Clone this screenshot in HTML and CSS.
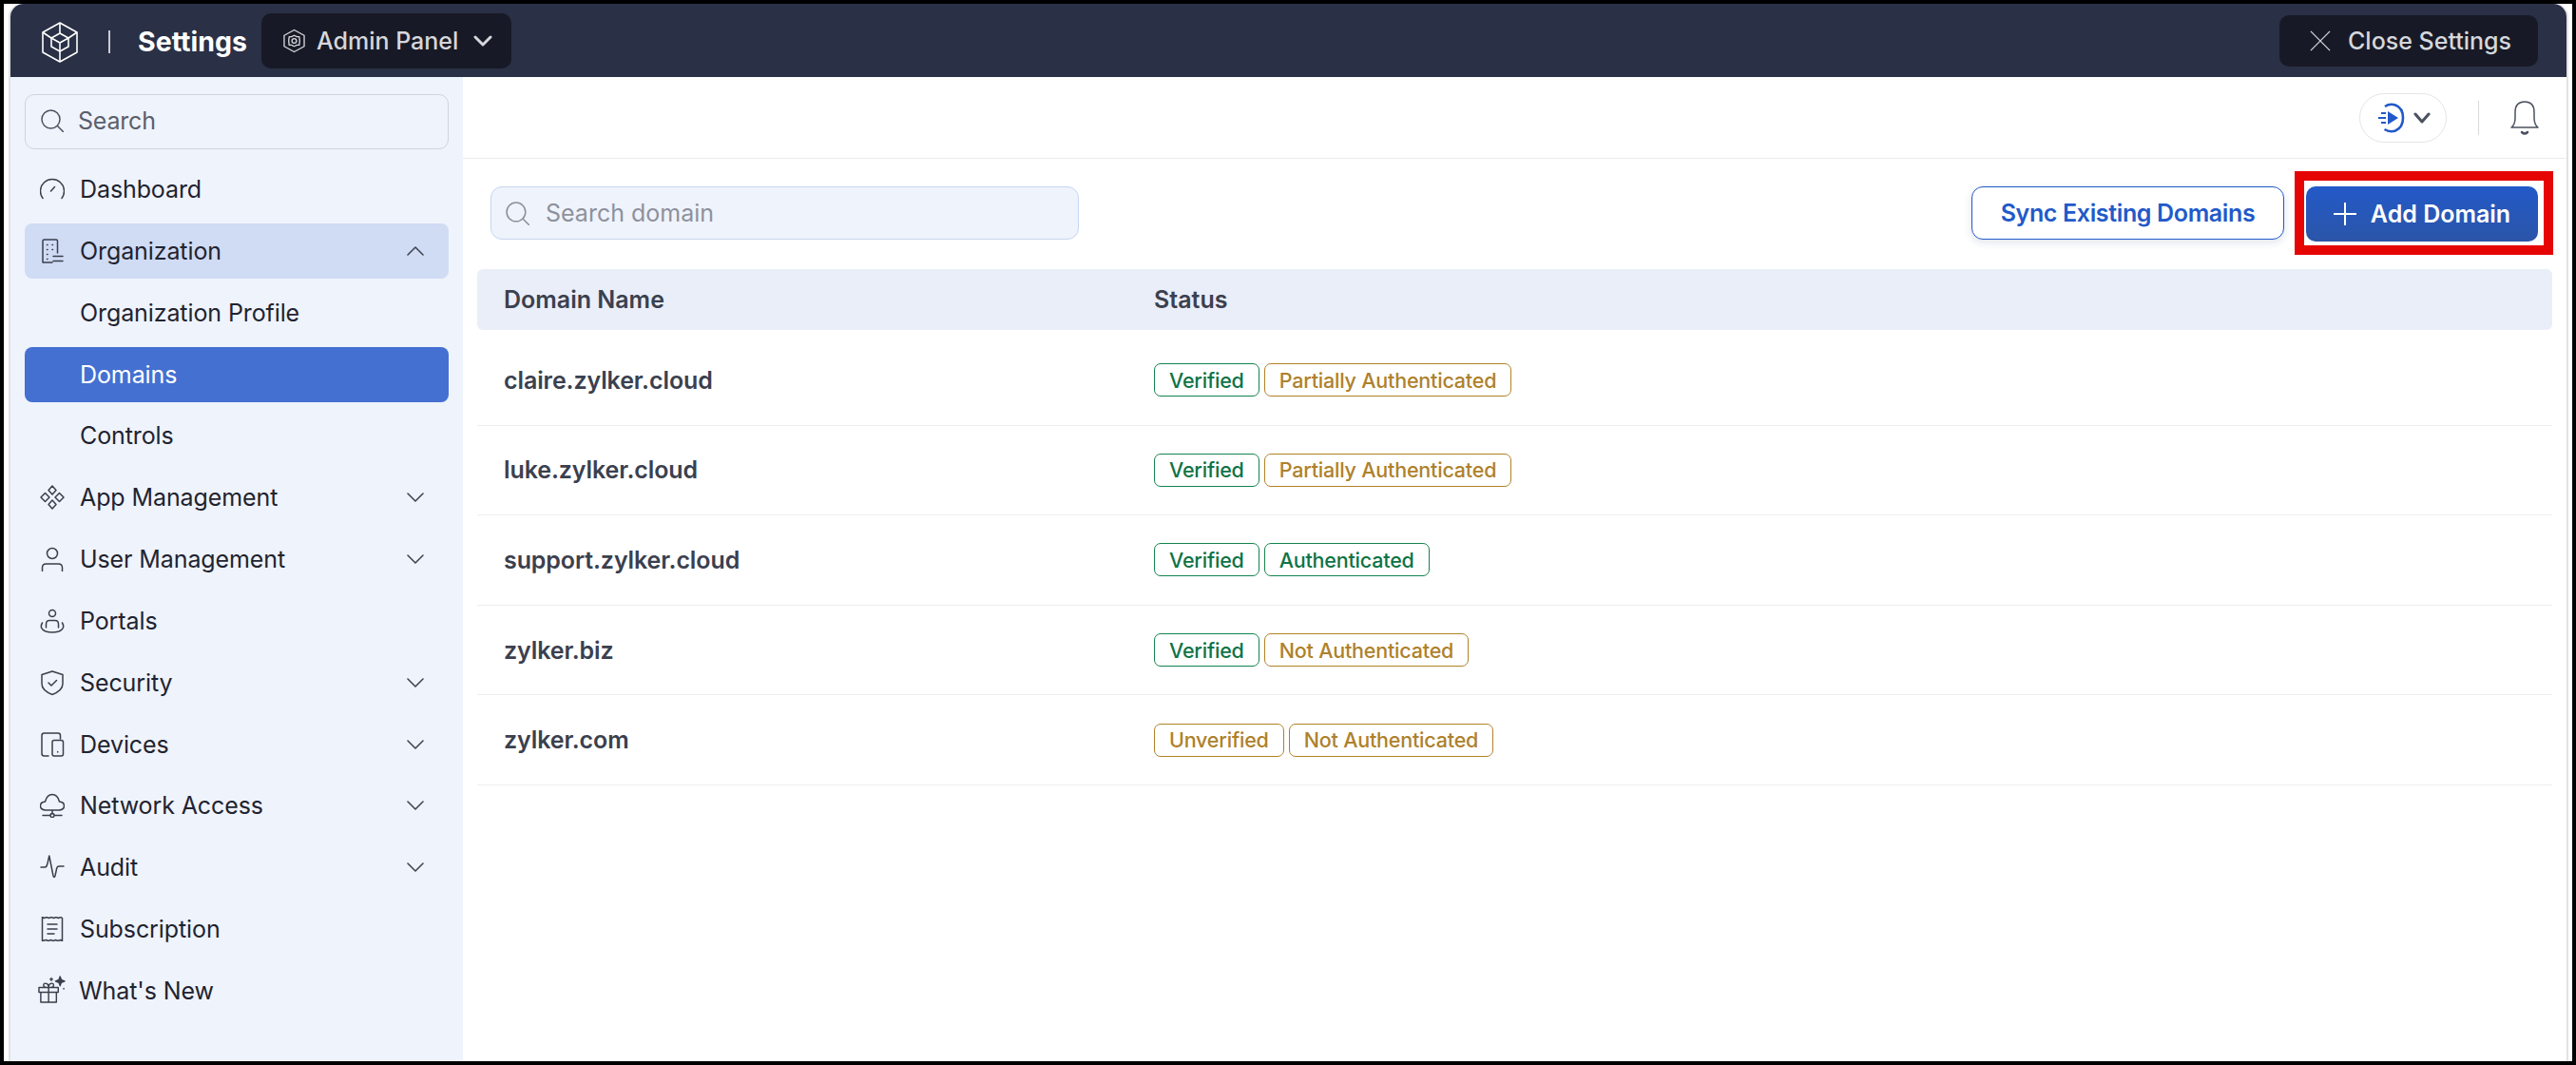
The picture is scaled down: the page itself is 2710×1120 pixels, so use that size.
FILE: index.html
```html
<!DOCTYPE html>
<html lang="en">
<head>
    <meta charset="UTF-8">
    <title>Settings - Domains</title>
    <link rel="stylesheet" href="styles.css">
</head>
<body>
    <div class="frame">
        <div class="app">
            <header class="topbar">
                <svg class="logo" viewBox="0 0 38 43" fill="none" stroke="#fff" stroke-width="1.6" stroke-linejoin="round">
                    <path d="M19 1 37 11V32L19 42 1 32V11Z"/>
                    <path d="M19 12 28 17V26L19 31 10 26V17Z"/>
                    <path d="M10 17 19 22 28 17M19 22V31M1 11 10 17M37 11 28 17M19 31V42M19 1V12"/>
                </svg>
                <span class="topbar-sep"></span>
                <span class="topbar-title">Settings</span>
                <div class="panel-switch">
                    <svg class="panel-icon" viewBox="0 0 24 26" fill="none" stroke="#d6d7dc" stroke-width="1.4" stroke-linejoin="round">
                        <path d="M12 1 23 7V19L12 25 1 19V7Z"/>
                        <path d="M12 7 15 8.500 17.500 8.500 18 12 18 14 17.500 17.500 15 17.500 12 19 9 17.500 6.500 17.500 6 14 6 12 6.500 8.500 9 8.500Z"/>
                        <circle cx="12" cy="13" r="2.500"/>
                    </svg>
                    <span>Admin Panel</span>
                    <svg class="panel-caret" viewBox="0 0 20 12" fill="none" stroke="#d6d7dc" stroke-width="3" stroke-linecap="round" stroke-linejoin="round"><path d="M2 2 10 10 18 2"/></svg>
                </div>
                <div class="close-btn">
                    <svg class="close-icon" viewBox="0 0 24 24" fill="none" stroke="#d6d7dc" stroke-width="1.400"><path d="M1 1 23 23M23 1 1 23"/></svg>
                    <span>Close Settings</span>
                </div>
            </header>

            <div class="body-row">
                <aside class="sidebar">
                    <div class="side-search">
                        <svg class="search-icon" viewBox="0 0 24 24" fill="none" stroke="#4c5160" stroke-width="1.500" stroke-linecap="round"><circle cx="10.500" cy="10.500" r="9.500"/><path d="M17.500 17.500 23.500 23.500"/></svg>
                        <span>Search</span>
                    </div>
                    <nav class="side-nav">
                        <a class="nav-item">
                            <svg class="nav-icon" viewBox="0 0 26 26"><path d="M3 22.500A12.500 12.500 0 1 1 23 22.500M11.500 15 15.500 10.500"/></svg>
                            <span class="nav-label">Dashboard</span>
                        </a>
                        <a class="nav-item open">
                            <svg class="nav-icon" viewBox="0 0 26 26"><path d="M3 25V2.500Q3 1 4.500 1H17Q18.500 1 18.500 2.500V15M3 25H13M7.500 6.500H8M13 6.500H13.500M7.500 11.500H8M13 11.500H13.500M7.500 16.500H8M7.500 21.500H8M14 18.500H24M14 23.500H24"/></svg>
                            <span class="nav-label">Organization</span>
                            <svg class="nav-caret" viewBox="0 0 18 10"><path d="M1 9 9 1 17 9"/></svg>
                        </a>
                        <a class="nav-item">
                            <span class="nav-icon"></span>
                            <span class="nav-label">Organization Profile</span>
                        </a>
                        <a class="nav-item current">
                            <span class="nav-icon"></span>
                            <span class="nav-label">Domains</span>
                        </a>
                        <a class="nav-item">
                            <span class="nav-icon"></span>
                            <span class="nav-label">Controls</span>
                        </a>
                        <a class="nav-item">
                            <svg class="nav-icon" viewBox="0 0 26 26"><path d="M13 1 17 5.500 13 10 9 5.500ZM13 16 17 20.500 13 25 9 20.500ZM5.500 8.500 10 13 5.500 17.500 1 13ZM20.500 8.500 25 13 20.500 17.500 16 13Z"/></svg>
                            <span class="nav-label">App Management</span>
                            <svg class="nav-caret" viewBox="0 0 18 10"><path d="M1 1 9 9 17 1"/></svg>
                        </a>
                        <a class="nav-item">
                            <svg class="nav-icon" viewBox="0 0 26 26"><circle cx="13" cy="7" r="5.500"/><path d="M2.500 26V22Q2.500 18 6.500 18H19.500Q23.500 18 23.500 22V26"/></svg>
                            <span class="nav-label">User Management</span>
                            <svg class="nav-caret" viewBox="0 0 18 10"><path d="M1 1 9 9 17 1"/></svg>
                        </a>
                        <a class="nav-item">
                            <svg class="nav-icon" viewBox="0 0 26 26"><circle cx="13" cy="5" r="3.500"/><path d="M6.500 20V16.500Q6.500 12.500 10 12.500H16Q19.500 12.500 19.500 16.500V20M2.500 15Q-1 21 6 24 13 26 20 24 27 21 23.500 15"/></svg>
                            <span class="nav-label">Portals</span>
                        </a>
                        <a class="nav-item">
                            <svg class="nav-icon" viewBox="0 0 26 26"><path d="M13 1 24 4.500V14Q24 21 13 25.500 2 21 2 14V4.500ZM9 13 12 16 17.500 10.500"/></svg>
                            <span class="nav-label">Security</span>
                            <svg class="nav-caret" viewBox="0 0 18 10"><path d="M1 1 9 9 17 1"/></svg>
                        </a>
                        <a class="nav-item">
                            <svg class="nav-icon" viewBox="0 0 26 26"><path d="M9 25H4.500Q2 25 2 22.500V3.500Q2 1 4.500 1H19Q21.500 1 21.500 3.500V7"/><rect x="13" y="8.500" width="11.500" height="16.500" rx="2"/><path d="M18.700 20.500V21"/></svg>
                            <span class="nav-label">Devices</span>
                            <svg class="nav-caret" viewBox="0 0 18 10"><path d="M1 1 9 9 17 1"/></svg>
                        </a>
                        <a class="nav-item">
                            <svg class="nav-icon" viewBox="0 0 26 26"><path d="M6 18H20Q25.500 17.500 25.500 13.500 25.500 9.500 20.500 9 18.500 1.500 13 1.500 7.500 1.500 5.500 9 .5 9.500 .5 13.500 .5 17.500 6 18ZM13 18V22M3 23.500H10.500M15.500 23.500H23"/><circle cx="13" cy="23.500" r="2"/></svg>
                            <span class="nav-label">Network Access</span>
                            <svg class="nav-caret" viewBox="0 0 18 10"><path d="M1 1 9 9 17 1"/></svg>
                        </a>
                        <a class="nav-item">
                            <svg class="nav-icon" viewBox="0 0 26 26"><path d="M1 13H5.500Q7 13 8 9L9.800 1 14 22Q15 25 16 22L17.500 15Q18 12 20 12H25"/></svg>
                            <span class="nav-label">Audit</span>
                            <svg class="nav-caret" viewBox="0 0 18 10"><path d="M1 1 9 9 17 1"/></svg>
                        </a>
                        <a class="nav-item">
                            <svg class="nav-icon" viewBox="0 0 26 26"><path d="M2.500 25.500V.5L4.500 1.500 7 .5 9.500 1.500 12 .5 14.500 1.500 17 .5 19.500 1.500 22 .5 23.500 1.500V25.500L21.500 24.500 19 25.500 16.500 24.500 14 25.500 11.500 24.500 9 25.500 6.500 24.500ZM8 8H18M8 13H18M8 18H15"/></svg>
                            <span class="nav-label">Subscription</span>
                        </a>
                        <a class="nav-item">
                            <svg class="nav-icon gift" viewBox="0 0 30 30"><path d="M1 13H22V18H1ZM3 18V29H20V18M11.500 13V29M11.500 13Q6 13 6 10.500 6 8 8.500 8.500 11.500 9 11.500 13 11.500 9 14.500 8.500 17 8 17 10.500 17 13 11.500 13ZM13 4H16M14.500 2.500V5.500"/><path class="spark" d="M24 1 25.200 4.500 29 6 25.200 7.500 24 11 22.800 7.500 19 6 22.800 4.500Z"/><path d="M28 14V14.500"/></svg>
                            <span class="nav-label">What's New</span>
                        </a>
                    </nav>
                </aside>

                <main class="content">
                    <div class="toolbar">
                        <div class="video-pill">
                            <svg class="video-icon" viewBox="0 0 30 32" fill="none" stroke="#2259c9" stroke-width="2.600"><path d="M9 4Q14 0.500 20 2.500 28 5.500 28 16 28 26 20 29.500 14 31.500 8.500 28"/><path d="M12 9 23 16 12 23Z" fill="#2259c9" stroke="none"/><path d="M5 11H10M2 16H10M5 21H10" stroke-width="2"/></svg>
                            <svg class="video-caret" viewBox="0 0 18 12" fill="none" stroke="#4c5160" stroke-width="3" stroke-linecap="round" stroke-linejoin="round"><path d="M2 2 9 10 16 2"/></svg>
                        </div>
                        <span class="toolbar-sep"></span>
                        <svg class="bell" viewBox="0 0 30 36" fill="none" stroke="#4c5160" stroke-width="1.500" stroke-linejoin="round"><path d="M1 28Q5 25 5 18V12Q5 1 15 1 25 1 25 12V18Q25 25 29 28Z"/><path d="M12 33Q15 36 18 33" stroke-width="2.500" stroke-linecap="round"/></svg>
                    </div>

                    <div class="actions">
                        <div class="domain-search">
                            <svg class="search-icon" viewBox="0 0 24 24" fill="none" stroke="#8d919c" stroke-width="1.500" stroke-linecap="round"><circle cx="10.500" cy="10.500" r="9.500"/><path d="M17.500 17.500 23.500 23.500"/></svg>
                            <span>Search domain</span>
                        </div>
                        <div class="action-btns">
                            <button class="btn-outline">Sync Existing Domains</button>
                            <div class="add-wrap">
                                <button class="btn-primary">
                                    <svg class="plus" viewBox="0 0 24 24" fill="none" stroke="#fff" stroke-width="2"><path d="M12 0V24M0 12H24"/></svg>
                                    Add Domain
                                </button>
                                <span class="highlight"></span>
                            </div>
                        </div>
                    </div>

                    <div class="table-head">
                        <div class="col-name">Domain Name</div>
                        <div>Status</div>
                    </div>
                    <div class="table-row">
                        <div class="col-name">claire.zylker.cloud</div>
                        <div class="chips"><span class="chip good">Verified</span><span class="chip warn">Partially Authenticated</span></div>
                    </div>
                    <div class="table-row">
                        <div class="col-name">luke.zylker.cloud</div>
                        <div class="chips"><span class="chip good">Verified</span><span class="chip warn">Partially Authenticated</span></div>
                    </div>
                    <div class="table-row">
                        <div class="col-name">support.zylker.cloud</div>
                        <div class="chips"><span class="chip good">Verified</span><span class="chip good">Authenticated</span></div>
                    </div>
                    <div class="table-row">
                        <div class="col-name">zylker.biz</div>
                        <div class="chips"><span class="chip good">Verified</span><span class="chip warn">Not Authenticated</span></div>
                    </div>
                    <div class="table-row">
                        <div class="col-name">zylker.com</div>
                        <div class="chips"><span class="chip warn">Unverified</span><span class="chip warn">Not Authenticated</span></div>
                    </div>
                </main>
            </div>
        </div>
    </div>
</body>
</html>
```

FILE: styles.css
```css
* {
    margin: 0;
    padding: 0;
    box-sizing: border-box;
}

body {
    font-family: Inter, 'Noto Sans', sans-serif;
    background: #000;
    color: #1f2430;
}

.frame {
    width: 2710px;
    height: 1120px;
    border: 4px solid #000;
    padding: 0 4px 0 5px;
    background: #fff;
}

.app {
    height: 100%;
    display: flex;
    flex-direction: column;
    border-left: 2px solid #e2e2e4;
    border-right: 2px solid #e2e2e4;
    border-radius: 14px 14px 0 0;
    background: #fff;
}

/* top bar */
.topbar {
    height: 77px;
    flex-shrink: 0;
    display: flex;
    align-items: center;
    padding: 0 30px 0 33px;
    background: #2a3046;
    border-radius: 14px 14px 0 0;
}

.logo {
    width: 38px;
    height: 43px;
    margin-top: 3px;
}

.topbar-sep {
    width: 2px;
    height: 24px;
    margin: 2px 0 0 32px;
    background: #c9cbd2;
}

.topbar-title {
    margin: 2px 0 0 29px;
    font-size: 28.500px;
    font-weight: 700;
    color: #fff;
}

.panel-switch {
    width: 263px;
    height: 58px;
    margin: 0 0 0 15px;
    padding-left: 23px;
    display: flex;
    align-items: center;
    border-radius: 10px;
    background: #171a26;
    color: #d6d7dc;
    font-size: 25px;
    font-weight: 500;
}

.panel-icon {
    width: 23px;
    height: 26px;
    margin-right: 12px;
}

.panel-caret {
    width: 20px;
    height: 12px;
    margin-left: 16px;
}

.close-btn {
    width: 272px;
    height: 54px;
    margin: 0 0 0 auto;
    padding-left: 32px;
    display: flex;
    align-items: center;
    border-radius: 10px;
    background: #171a26;
    color: #d6d7dc;
    font-size: 25px;
    font-weight: 500;
}

.close-icon {
    width: 22px;
    height: 22px;
    margin-right: 18px;
}

/* sidebar */
.body-row {
    flex: 1;
    display: flex;
    min-height: 0;
}

.sidebar {
    width: 476px;
    flex-shrink: 0;
    padding: 18px 15px 0;
    background: #eff3fc;
}

.side-search {
    height: 58px;
    display: flex;
    align-items: center;
    padding-left: 16px;
    padding-bottom: 2px;
    border: 1.5px solid #cfd3dc;
    border-radius: 10px;
    color: #5a5f6c;
    font-size: 25px;
    letter-spacing: -0.2px;
}

.search-icon {
    width: 24px;
    height: 24px;
    margin-right: 15px;
    flex-shrink: 0;
}

.side-nav {
    margin-top: 13px;
    display: flex;
    flex-direction: column;
    gap: 6.850px;
}

.nav-item {
    height: 58px;
    display: flex;
    align-items: center;
    padding: 0 26px 0 16px;
    border-radius: 8px;
    font-size: 25px;
    letter-spacing: -0.1px;
    color: #1f2430;
}

.nav-item.open {
    background: #d0dbf4;
}

.nav-item.current {
    background: #4470d1;
    color: #fff;
}

.nav-icon {
    width: 26px;
    height: 26px;
    margin-right: 16px;
    flex-shrink: 0;
    fill: none;
    stroke: #3a3f4c;
    stroke-width: 1.500;
    stroke-linecap: round;
    stroke-linejoin: round;
}

.nav-icon.gift {
    width: 29px;
    height: 29px;
    margin: -2px 14px 0 -2px;
}

.nav-icon .spark {
    fill: #3a3f4c;
}

.nav-label {
    flex: 1;
}

.nav-caret {
    width: 18px;
    height: 10px;
    fill: none;
    stroke: #3f4452;
    stroke-width: 1.600;
    stroke-linecap: round;
    stroke-linejoin: round;
}

/* main area */
.content {
    flex: 1;
    min-width: 0;
    padding: 0 15px;
}

.toolbar {
    height: 86px;
    margin: 0 -15px;
    padding: 0 29px 0 0;
    display: flex;
    align-items: center;
    justify-content: flex-end;
    border-bottom: 1px solid #ececee;
}

.video-pill {
    width: 92px;
    height: 52px;
    display: flex;
    align-items: center;
    justify-content: center;
    gap: 9px;
    border: 1px solid #e4e5e8;
    border-radius: 26px;
}

.video-icon {
    width: 30px;
    height: 32px;
}

.video-caret {
    width: 18px;
    height: 12px;
}

.toolbar-sep {
    width: 1px;
    height: 36px;
    margin: 0 33px;
    background: #d9dade;
}

.bell {
    width: 30px;
    height: 36px;
}

.actions {
    display: flex;
    align-items: flex-start;
    justify-content: space-between;
    padding: 29px 15px 0 14px;
    height: 116px;
}

.domain-search {
    width: 619px;
    height: 56px;
    display: flex;
    align-items: center;
    padding-left: 15px;
    border: 1.5px solid #c6d5f1;
    border-radius: 12px;
    background: #eff3fc;
    color: #8d919c;
    font-size: 25px;
}

.domain-search .search-icon {
    width: 25px;
    height: 25px;
    margin-right: 17px;
}

.action-btns {
    display: flex;
    gap: 23px;
}

button {
    font-family: inherit;
    font-size: 25px;
    font-weight: 600;
    cursor: pointer;
}

.btn-outline {
    width: 329px;
    height: 56px;
    border: 1.5px solid #2259c9;
    border-radius: 12px;
    background: #fff;
    color: #2259c9;
    letter-spacing: -0.35px;
    box-shadow: 0 3px 8px rgba(30, 60, 120, 0.14);
}

.add-wrap {
    position: relative;
}

.btn-primary {
    width: 244px;
    height: 58px;
    display: flex;
    align-items: center;
    justify-content: center;
    gap: 15px;
    padding-bottom: 1px;
    border: none;
    border-radius: 10px;
    background: linear-gradient(to bottom, #2359c8, #2b55a8);
    color: #fff;
}

.plus {
    width: 24px;
    height: 24px;
}

.highlight {
    position: absolute;
    top: -16px;
    left: -12px;
    right: -16px;
    bottom: -14px;
    border: 10px solid #e60505;
}

/* table */
.table-head {
    height: 64px;
    display: flex;
    align-items: center;
    margin-bottom: 6px;
    padding-bottom: 1px;
    border-radius: 6px;
    background: #e9eef9;
    font-size: 25px;
    font-weight: 600;
    color: #3b404e;
}

.col-name {
    width: 712px;
    padding-left: 28px;
}

.table-row {
    height: 94.600px;
    display: flex;
    align-items: center;
    border-bottom: 1px solid #eeeef0;
    font-size: 25px;
    font-weight: 600;
    letter-spacing: -0.1px;
    color: #3b404e;
}

.chips {
    display: flex;
    gap: 5px;
}

.chip {
    height: 35px;
    display: flex;
    align-items: center;
    padding: 0 15px;
    border: 1.5px solid;
    border-radius: 7px;
    font-size: 21.500px;
    font-weight: 500;
    letter-spacing: -0.2px;
}

.chip.good {
    border-color: #14834e;
    color: #0f7346;
}

.chip.warn {
    border-color: #b08227;
    color: #ae812b;
}
```
